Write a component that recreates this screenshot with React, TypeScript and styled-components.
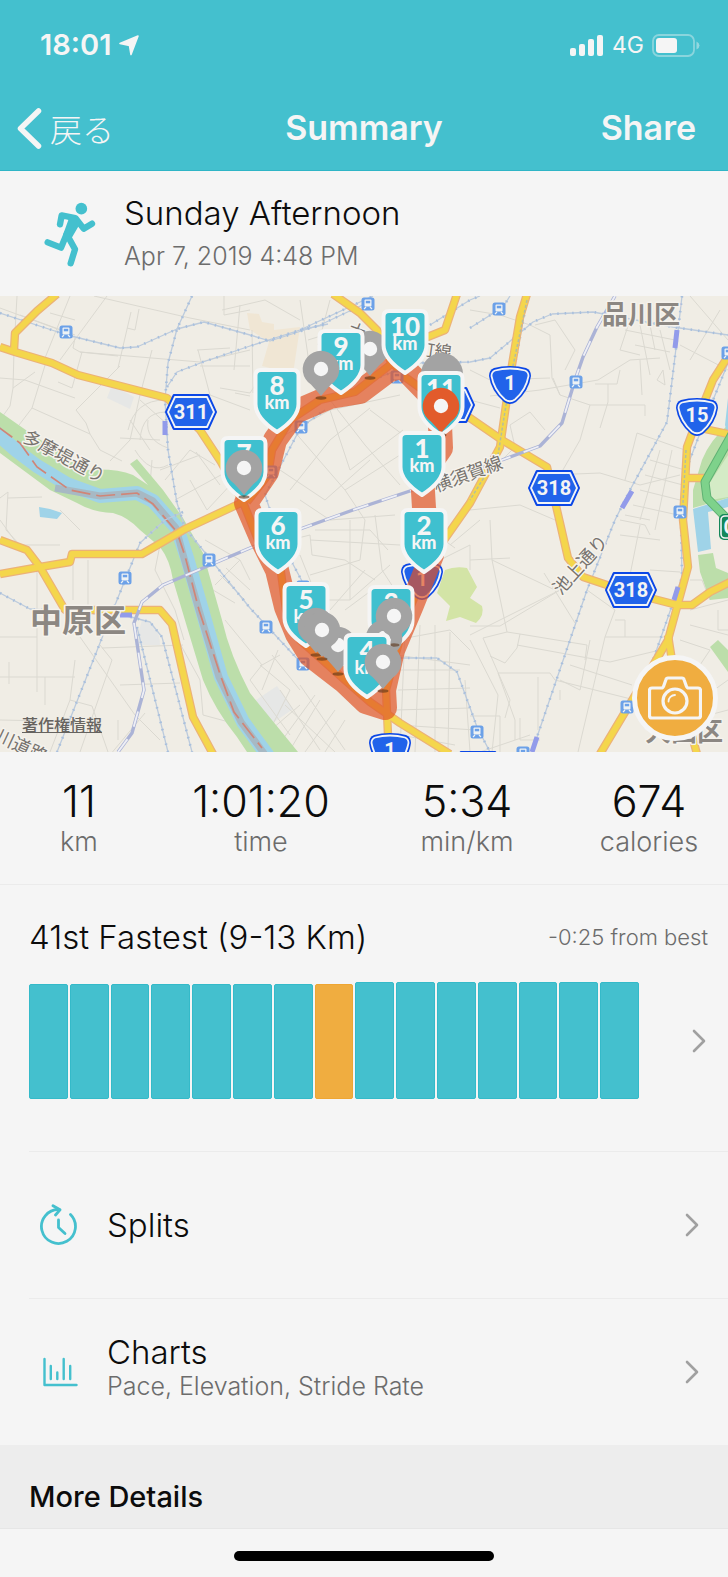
import React from "react";
import styled, { createGlobalStyle } from "styled-components";

const teal = "#44c0ce";
const orange = "#f0ad40";
const ink = "#0c0c0c";
const muted = "#6c6c6c";
const surface = "#f5f5f5";
const rule = "#ebebeb";

const GlobalStyle = createGlobalStyle`
  *, *::before, *::after { box-sizing: border-box; }
  html, body { margin: 0; min-height: 100%; }
  body {
    background: ${surface};
    color: ${ink};
    font-family: Inter, "Noto Sans CJK JP", sans-serif;
    font-weight: 300;
  }
  h1, h2, p, dl, dd, dt, ul { margin: 0; padding: 0; font-weight: inherit; }
  button { border: 0; padding: 0; background: none; color: inherit; font: inherit; cursor: pointer; }
  a { color: inherit; text-decoration: none; }
  svg { display: block; flex: none; }
`;

const Screen = styled.div`
  display: flex;
  flex-direction: column;
  min-height: 100vh;
`;

const Header = styled.header`
  background: ${teal};
  border-bottom: 1px solid #2fb5c6;
  color: ${surface};
`;

const StatusBar = styled.div`
  display: flex;
  align-items: center;
  justify-content: space-between;
  height: 90px;
  padding: 0 28px 0 40px;
`;

const StatusGroup = styled.div`
  display: flex;
  align-items: center;
  gap: 8px;
`;

const Clock = styled.time`
  font-size: 29px;
  font-weight: 600;
  line-height: 32px;
`;

const Network = styled.span`
  font-size: 23px;
  font-weight: 400;
  line-height: 28px;
`;

const NavBar = styled.nav`
  display: grid;
  grid-template-columns: 1fr auto 1fr;
  align-items: center;
  height: 80px;
  padding: 0 32px 4px;
  line-height: 44px;
`;

const BackButton = styled.button`
  display: flex;
  align-items: center;
  gap: 8px;
  justify-self: start;
  margin-left: -15px;
  font-family: "Noto Sans CJK JP", sans-serif;
  font-size: 32px;
  line-height: 40px;
`;

const NavTitle = styled.h1`
  font-size: 34px;
  font-weight: 600;
`;

const ShareButton = styled.button`
  justify-self: end;
  font-size: 34px;
  font-weight: 600;
`;

const Activity = styled.section`
  display: flex;
  align-items: center;
  gap: 28px;
  height: 125px;
  padding: 0 44px;
`;

const Title = styled.h2`
  font-size: 33px;
  line-height: 44px;
`;

const Caption = styled.p`
  color: ${muted};
  font-size: 25px;
  line-height: 42px;
`;

const MapPanel = styled.section`
  position: relative;
  height: 456px;
  overflow: hidden;
  background: #f0ede5;
`;

const MapDrawing = styled.svg`
  width: 100%;
  height: 100%;
`;

const LegalLink = styled.a`
  position: absolute;
  left: 22px;
  bottom: 16px;
  color: #66635f;
  font-family: "Noto Sans CJK JP", sans-serif;
  font-size: 16px;
  font-weight: 500;
  line-height: 24px;
  text-decoration: underline;
`;

const CameraButton = styled.button`
  position: absolute;
  right: 10px;
  bottom: 11px;
  display: grid;
  place-items: center;
  width: 86px;
  height: 86px;
  border: 5px solid ${surface};
  border-radius: 50%;
  background: ${orange};
`;

const Stats = styled.dl`
  display: grid;
  grid-template-columns: 158fr 206fr 206fr 158fr;
  height: 133px;
  padding-top: 24px;
  border-bottom: 1px solid ${rule};
  text-align: center;
`;

const Stat = styled.div`
  display: flex;
  flex-direction: column-reverse;
  justify-content: flex-end;
`;

const StatValue = styled.dd`
  font-size: 43px;
  line-height: 50px;
`;

const StatLabel = styled.dt`
  color: ${muted};
  font-size: 27px;
  line-height: 32px;
`;

const Ranking = styled.section`
  padding: 30px 20px 52px 29px;
`;

const RankingHeader = styled.div`
  display: flex;
  align-items: center;
  justify-content: space-between;
`;

const Delta = styled.p`
  color: ${muted};
  font-size: 22px;
  line-height: 28px;
`;

const RankingLink = styled.a`
  display: flex;
  align-items: center;
  justify-content: space-between;
  gap: 53px;
  padding-right: 2px;
  margin-top: 23px;
`;

const Bars = styled.div`
  display: flex;
  flex: 1;
  align-items: flex-end;
  gap: 2px;
  height: 117px;
`;

const Bar = styled.span<{ $current?: boolean; $tall?: boolean }>`
  flex: 1;
  height: ${(p) => (p.$tall ? 117 : 115)}px;
  border: 1px solid ${(p) => (p.$current ? "#efa632" : "#34bac9")};
  border-radius: 2px;
  background: ${(p) => (p.$current ? orange : teal)};
`;

const Rows = styled.ul`
  list-style: none;
`;

const Row = styled.li`
  margin-left: 29px;
  border-top: 1px solid ${rule};
`;

const RowLink = styled.a`
  display: flex;
  align-items: center;
  gap: 29px;
  height: 146px;
  padding: 0 29px 0 10px;
`;

const RowText = styled.div`
  flex: 1;
`;

const RowTitle = styled.p`
  font-size: 33px;
  line-height: 36px;
`;

const RowCaption = styled.p`
  padding-bottom: 8px;
  color: ${muted};
  font-size: 25px;
  line-height: 32px;
`;

const MoreDetails = styled.section`
  height: 84px;
  padding: 32px 29px 0;
  border-bottom: 1px solid #e6e6e6;
  background: #ededed;
`;

const MoreTitle = styled.h2`
  font-size: 29px;
  font-weight: 500;
  line-height: 40px;
`;

const HomeArea = styled.footer`
  display: flex;
  justify-content: center;
  padding: 22px 0 16px;
`;

const HomeIndicator = styled.span`
  width: 260px;
  height: 10px;
  border-radius: 5px;
  background: #000;
`;

const ChevronRight = () => (
  <svg width="14" height="24" viewBox="0 0 14 24" fill="none" stroke="#a0a0a0" strokeWidth="2.6" strokeLinecap="round" strokeLinejoin="round" aria-hidden="true">
    <path d="M2 2 L12 12 L2 22" />
  </svg>
);

const RunnerIcon = () => (
  <svg width="52" height="66" viewBox="130 605 156 198" fill="none" stroke={teal} strokeWidth="19" strokeLinecap="round" strokeLinejoin="round" aria-hidden="true">
    <circle cx="242" cy="628" r="17.5" fill={teal} stroke="none" />
    <path d="M178 675 L183 648 L224 656 L249 688 L274 673" />
    <path d="M190 648 L226 654 L241 668 L213 716 L187 706 L203 662Z" fill={teal} stroke="none" />
    <path d="M219 663 L199 706 L223 750 L210 792" />
    <path d="M199 702 L181 745 L141 729" />
  </svg>
);

const SplitsIcon = () => (
  <svg width="39" height="42" viewBox="0 0 39 42" fill="none" stroke={teal} strokeWidth="2.8" strokeLinecap="round" strokeLinejoin="round" aria-hidden="true">
    <path d="M31.500 10.500 A17 17 0 1 1 20 5.500" />
    <path d="M14 1.800 L21 5.800 L16.500 11" />
    <path d="M19.500 16 V23.500 L26 29.500" />
  </svg>
);

const ChartsIcon = () => (
  <svg width="39" height="30" viewBox="0 0 39 30" fill="none" stroke={teal} strokeWidth="2.4" strokeLinecap="round" strokeLinejoin="round" aria-hidden="true">
    <path d="M5.500 2 V28 H37.500" />
    <path d="M11.800 9 V22 M18.300 15.500 V22 M24.700 2 V22 M31.200 9 V22" />
  </svg>
);

const CameraIcon = () => (
  <svg width="54" height="45" viewBox="0 0 54 45" fill="none" stroke={surface} strokeWidth="3.2" strokeLinejoin="round" aria-hidden="true">
    <path d="M4 12 H13.5 Q15 12 15.7 10 L17.8 4 Q18.3 2 20 2 H34 Q35.7 2 36.2 4 L38.3 10 Q39 12 40.500 12 H50 Q52.500 12 52.500 14.500 V39.500 Q52.500 42 50 42 H4 Q1.500 42 1.500 39.500 V14.500 Q1.500 12 4 12 Z" />
    <circle cx="27" cy="25" r="12" />
    <path d="M20.500 25.500 A6.500 6.500 0 0 1 27 19" strokeWidth="1.800" strokeLinecap="round" />
  </svg>
);

const minorRoads = [
  "M17 296 L14 350 L13 388 L10 406 L0 420 M70 296 L45 358 M0 308 L60 330 M20 315 L75 335 M75 320 L50 313",
  "M94 296 L190 318 L250 330 M139 309 L135 330 L127 328 M107 296 L60 360 M131 312 L118 368 M75 338 L73 348 L80 352 L118 356",
  "M80 352 L200 362 L250 350 M152 350 L140 395 L130 440 L110 461 M0 378 L25 380 L75 398 M82 352 L72 388 L58 382",
  "M46 362 L32 408 L0 450 M32 408 L90 434 L86 423 L76 410 L120 366 M13 388 L35 372 M90 434 L100 450 L122 461",
  "M198 350 L210 395 L250 410 M200 366 H250 M197 350 L230 348 M235 393 L250 396 M224 296 V315 L250 310",
  "M120 438 L160 440 M130 420 L150 450 M140 400 L168 425 M128 430 Q135 400 165 400 M140 440 Q142 412 166 412 M135 450 Q150 475 168 465 M148 420 Q145 440 168 448 M152 460 L150 485",
  "M165 480 L190 450 L215 465 M175 500 L230 470 M160 470 L200 455 M190 480 L207 510 L235 480 M196 452 L220 485",
  "M0 498 L8 492 L6 530 L20 545 M8 498 L42 497 M0 520 L18 545 L60 545 M60 510 L80 530",
  "M73 560 V600 M88 560 V608 M37 566 V692 M0 637 H37 M80 637 L135 715 L160 740 M102 648 L183 645 M0 677 H75 M45 677 V705 M9 662 V684 M75 660 L70 700 L50 752",
  "M100 645 L112 660 L80 752 M120 685 L180 683 M110 755 L145 713 M70 700 L92 706 L108 752 M0 720 L100 722 M118 720 V740 M178 640 L200 680 L203 715 L240 725",
  "M160 545 L155 570 L175 610 L184 640 M215 585 L240 560 L250 580 M213 590 L235 603 M220 575 L245 600 M226 568 L250 590 M205 540 L240 560",
  "M222 310 L265 300 L300 320 M240 305 L234 370 M252 330 L253 393 M220 388 L250 393 L265 370 M300 300 L310 370 M330 300 L318 345 M308 340 L340 330",
  "M276 440 L330 410 L400 395 M293 430 L345 490 L400 455 M330 410 L350 470 L403 430 M280 470 L325 500 L370 460 M290 490 L330 440 L370 408",
  "M300 500 L330 520 L395 515 M345 490 L365 520 L360 560 L310 575 M330 400 L365 445 L400 485 M370 410 L410 440 M310 540 L400 545 M350 520 V600 M375 515 L382 570 L395 590",
  "M290 540 L310 535 L312 555 L345 560 L375 580 M300 555 L318 600 L350 600 L390 565 M315 530 L370 530 L388 550 M330 610 L365 570 M345 610 L372 590",
  "M225 620 L262 665 L280 655 M260 665 L290 690 L270 730 M272 655 L300 690 M262 665 L250 680 L290 735 M278 650 L262 690",
  "M280 690 L320 750 M300 685 L345 750 M320 700 L290 750 M335 710 L305 752 M345 720 L325 752 M285 705 L335 752 M265 735 L300 705 M275 750 L315 695",
  "M395 640 L450 630 L470 650 M400 670 H460 M398 690 L470 688 M405 630 L400 752 M420 625 L415 752 M435 625 V752 M450 632 L448 752 M395 655 L470 665 M395 710 L470 708 M398 725 L475 730 M400 735 L455 745 M465 680 L470 752",
  "M440 560 L470 545 L470 570 M450 545 L480 520 M430 530 L455 548",
  "M470 310 L500 315 L530 325 L550 335 M470 370 L490 380 L550 378 M490 396 L540 390 L598 380 L630 360 L660 358 M535 325 L555 320 L575 350 L565 370",
  "M550 335 L552 378 L560 395 L590 405 H645 V416 M595 384 H617 L620 370 M608 384 V402 L600 428 M590 405 L580 440 L560 475 M553 378 L560 395 M640 360 L642 395",
  "M502 460 L515 447 L510 425 L530 412 L545 430 M470 400 L500 408 M550 475 L600 473 L640 485 L680 475",
  "M630 320 L620 350 L640 355 M640 325 L650 375 M650 325 L655 350 M660 330 L670 370 M625 330 L675 340 M635 345 L670 352 M663 370 L665 385 L657 380 Z M680 345 L728 370 M690 296 L728 340",
  "M720 310 L690 360 M637 433 L665 443 L685 450 M637 433 L625 480 M660 450 L640 520 M672 450 L655 530 M650 460 L685 470 M645 475 L683 485 M640 490 L680 500 M633 505 L678 515 M625 515 L650 520",
  "M470 510 L520 505 L555 520 M490 520 L492 560 L555 590 M470 560 L510 558 M492 560 L507 632 M544 573 L575 623 M470 626 H500 L560 590 M470 635 L570 585",
  "M483 638 L507 632 M507 632 L520 634 L587 645 L585 660 M483 638 L510 700 L505 718 M470 640 L498 695 L492 752 M520 634 L517 648 L505 663 L490 656 M517 645 L610 662 L660 650",
  "M587 590 L615 610 L605 637 L578 752 M605 637 H665 M615 620 H625 V637 M570 665 L632 685 M560 680 L580 690 L590 640 M498 673 H550 L555 680 L635 700 M560 690 V700 M498 673 L515 720 V740 M538 677 V730",
  "M620 520 L645 525 L650 535 M620 535 L660 540 M640 525 L625 600 M650 570 L680 572 M690 610 L728 600 M690 625 L728 635 M680 640 L710 650 L690 680 M690 580 H702 L710 600 M718 610 V630 H728",
  "M470 716 H500 V752 M520 718 V740 H540 M480 752 L530 735 M700 700 L728 680 M690 720 L728 710",
];

const railways = [
  "M0 313 L67 335 L120 348 L137 347 L177 329 L204 322 L250 335 L270 341 L320 325 L373 300",
  "M192 296 L177 329 L168 363 L165 400 L168 450 L177 503 L185 528 L250 608 L303 665",
  "M167 387 L177 372 L203 362 L250 346 L300 330 L373 296 M300 330 L328 324",
  "M183 512 L165 520 L140 543 L115 605 L100 643 L57 752",
  "M0 593 L30 609 L123 615 L150 622 L162 637 L192 752 M137 627 L168 752",
  "M301 427 L265 495 L280 540 L303 583 M301 427 L325 410",
  "M393 658 L437 658 L457 672 L477 727 L490 752",
  "M430 325 L470 300 L480 296 M380 377 L415 363 L470 362 L490 358 L533 322 L552 314 L593 312 L673 327 L728 335",
  "M470 328 L503 307 L510 296",
  "M682 296 L677 340 L667 422 L630 490 L615 520 L587 590 L537 737 L532 752",
  "M728 363 L705 420 L686 470 L681 520 L682 577 L652 663 L632 697 L602 752",
  "M527 300 L498 455 L462 515",
];

const mainLine =
  "M118 752 L132 733 L144 690 L134 623 L142 602 L163 585 L250 548 L303 528 L353 510 L407 492 L502 460 L540 446 L562 423 L575 380 L583 357 L597 327 L615 296";

const yellowRoads = [
  "M57 294 L37 311 L15 333 L14 350",
  "M0 347 L15 352 L52 363 L78 375 L167 398 L200 430 L221 462 L243 502",
  "M0 574 L40 567 L70 562 L72 554 H142 L185 529 L243 502",
  "M0 540 L27 550 L40 567 L65 610 H160 L172 624 L193 717 L213 754",
  "M333 294 L360 313 L377 330 L390 360 L405 377 L430 395 L470 418 L502 440 L547 467 L560 523 L568 558 L583 577 L607 585 L650 598 L677 605 H692 L710 592 L730 582",
  "M457 294 L445 330 L415 342 L390 365 L355 392 L320 400 L290 420 L272 450 L268 475 L247 502",
  "M243 502 L258 540 L280 565 L286 610 L300 640 L345 680 L370 702 L400 723 L450 754",
  "M527 294 L520 317 L510 377 L500 447 L470 503 L430 560 L405 620 L386 690 L388 735",
  "M732 350 L713 380 L697 420 L687 447 L683 520 L688 567 L668 640 L652 667 L600 754",
  "M668 635 L673 667 L697 754 M700 428 L728 434 M687 478 H705",
];

const stations = [
  [66, 332], [368, 304], [301, 427], [397, 377], [271, 472], [499, 309], [576, 382], [728, 353], [680, 512],
  [125, 578], [209, 560], [266, 627], [303, 664], [477, 732], [627, 707], [523, 753], [303, 587],
];

const Station = ({ x, y }: { x: number; y: number }) => (
  <g transform={`translate(${x} ${y})`}>
    <rect x="-6.500" y="-6.500" width="13" height="13" rx="2.500" fill="#6ca1e8" />
    <path d="M-2.500 -4.500 H2.500 Q3.500 -4.500 3.500 -3.500 V1.500 Q3.500 2.500 2.500 2.500 H-2.500 Q-3.500 2.500 -3.500 1.500 V-3.500 Q-3.500 -4.500 -2.500 -4.500Z" fill="#eef2f4" />
    <rect x="-2.200" y="-3.200" width="4.400" height="2.500" fill="#6ca1e8" />
    <path d="M-2 3 L-4 5 M2 3 L4 5" stroke="#eef2f4" strokeWidth="1.200" />
  </g>
);

const SignText = styled.text`
  fill: #f4f4f4;
  font-family: Roboto, sans-serif;
  font-size: 20px;
  font-weight: 700;
  text-anchor: middle;
`;

const HexSign = ({ x, y, label }: { x: number; y: number; label?: string }) => (
  <g transform={`translate(${x} ${y})`} strokeLinejoin="round">
    <path d="M-17 -16.500 H17 L24.500 0 L17 16.500 H-17 L-24.500 0Z" fill="#0b47e6" stroke="#0b47e6" strokeWidth="3" />
    <path d="M-16 -15 H16 L23 0 L16 15 H-16 L-23 0Z" fill="#2163ea" stroke="#f2f4f6" strokeWidth="1.800" />
    {label && <SignText y="7">{label}</SignText>}
  </g>
);

const RouteSign = ({ x, y, label }: { x: number; y: number; label: string }) => (
  <g transform={`translate(${x} ${y})`}>
    <path d="M0 -19 Q9 -19 16 -17 Q21 -15 21 -9 Q19 6 6 17 Q0 21 -6 17 Q-19 6 -21 -9 Q-21 -15 -16 -17 Q-9 -19 0 -19Z" fill="#0b47e6" />
    <path d="M0 -16.500 Q8 -16.500 15 -14.500 Q18.500 -13 18.500 -9 Q16 5 5 14.500 Q0 18 -5 14.500 Q-16 5 -18.500 -9 Q-18.500 -13 -15 -14.500 Q-8 -16.500 0 -16.500Z" fill="#2163ea" stroke="#f2f4f6" strokeWidth="1.800" />
    <SignText y="5">{label}</SignText>
  </g>
);

const MarkerText = styled.text<{ $unit?: boolean }>`
  fill: ${surface};
  font-family: Lato, sans-serif;
  font-size: ${(p) => (p.$unit ? 18 : 26)}px;
  font-weight: 900;
  text-anchor: middle;
`;

const KmMarker = ({ x, y, km }: { x: number; y: number; km: string }) => (
  <g transform={`translate(${x} ${y})`}>
    <path d="M-16 2 H16 Q21.500 2 21.500 7.500 V36 Q21.500 50 0 64 Q-21.500 50 -21.500 36 V7.500 Q-21.500 2 -16 2Z" fill="#3fc0cf" stroke={surface} strokeWidth="4" strokeLinejoin="round" />
    <MarkerText y="27">{km}</MarkerText>
    <MarkerText y="41" $unit>km</MarkerText>
  </g>
);

const Drop = ({ x, y, color = "#a3a3a3" }: { x: number; y: number; color?: string }) => (
  <g transform={`translate(${x} ${y})`}>
    <ellipse cx="0" cy="29" rx="5.500" ry="1.700" fill="#5a3318" opacity="0.6" />
    <path d="M0 27 Q-4 22 -10 15.500 A18.300 18.300 0 1 1 10 15.500 Q4 22 0 27Z" fill={color} />
    <circle r="7.200" fill={surface} />
  </g>
);

const Place = styled.text<{ $size: number; $strong?: boolean }>`
  fill: ${(p) => (p.$strong ? "#8c8782" : "#77736e")};
  stroke: #f5f2ec;
  stroke-width: 3px;
  stroke-linejoin: round;
  paint-order: stroke;
  font-family: "Noto Sans CJK JP", sans-serif;
  font-size: ${(p) => p.$size}px;
  font-weight: ${(p) => (p.$strong ? 700 : 400)};
  text-anchor: middle;
`;

const routePath =
  "M440 425 L441 448 L422 475 L424 508 L432 555 L412 605 L393 650 L384 690 L385 708 L366 702 L345 682 L310 655 L297 634 L286 607 L277 570 L262 540 L246 503 L267 472 L275 440 L295 412 L330 397 L360 392 L388 371 L402 366 L432 397";

const RunMap = () => (
  <MapDrawing viewBox="0 296 728 456" preserveAspectRatio="xMidYMid slice" role="img" aria-label="Map of the run with a marker at each kilometre">
    <rect x="-400" y="296" width="1600" height="456" fill="#f0ede5" />
    <path d="M247 313 L259 314 L262 322 L274 324 L274 330 L300 327 L293 374 L262 366 L269 342 L250 330Z" fill="#f0e6d4" />
    <path d="M112 385 L134 397 L130 409 L107 398Z M256 700 L277 686 L293 709 L270 725Z M142 620 Q160 625 160 645 L135 645Z" fill="#e6e7e6" />
    <path d="M445 570 Q455 566 467 568 L477 587 L470 598 L482 606 Q485 615 476 623 L460 617 L446 621 L450 606 L437 593Z" fill="#d3e4a6" />

    <g fill="none" stroke="#dbd9d1" strokeWidth="1">
      {minorRoads.map((d) => <path key={d} d={d} />)}
    </g>

    <path d="M0 412 L33 435 L87 470 Q115 468 133 475 L148 485 L130 464 L137 459 L163 490 L183 518 L203 553 L222 620 Q230 655 250 693 L298 752 H247 L237 737 Q215 710 203 680 L187 627 L173 580 Q170 560 160 547 L140 530 Q128 517 113 513 Q92 512 77 503 L50 490 L0 453Z" fill="#bcdeaa" />
    <path d="M-5 432 L17 451 L37 466 L67 484 L100 496 L137 493 L153 501 L177 528 L187 558 L202 610 L221 677 L243 722 L268 756" fill="none" stroke="#9fd3e8" strokeWidth="14" strokeLinejoin="round" />
    <path d="M55 488 L100 496 L137 493 L153 501 L176 528 L184 558 L199 610 L219 677 L241 722 L266 756" fill="none" stroke="#a7b9c4" strokeWidth="7" strokeLinejoin="round" />
    <path d="M-3 426 L20 443 L37 467 L70 490 L100 496 L137 493 L153 504 L177 532 L185 556 L199 610 L221 677 L234 712 L262 748" fill="none" stroke="#d08577" strokeWidth="1.700" strokeDasharray="19 6" />
    <path d="M39 507 L50 509 L62 513 L57 519 L40 517Z" fill="#9fd3e8" />

    <path d="M728 425 Q710 440 702 460 L693 490 V508 L728 498Z M698 555 L713 553 L716 568 L728 573 V598 L710 600 L700 572Z M710 647 L718 640 L728 650 V672Z" fill="#bcdeaa" />
    <path d="M728 455 L709 484 L711 500 L728 497Z" fill="#d4ebc6" />
    <path d="M693 509 L728 498 V507 L708 512 L711 549 L698 552Z M728 398 L725 425 L728 436Z" fill="#9fd3e8" />

    <g fill="none" strokeLinejoin="round">
      <g stroke="#bccbdd" strokeWidth="1.300">{railways.map((d) => <path key={d} d={d} />)}</g>
      <g stroke="#a8bfdd" strokeWidth="2.600" strokeDasharray="1.500 6">{railways.map((d) => <path key={d} d={d} />)}</g>
      <g stroke="#ecb277" strokeWidth="8.400">{yellowRoads.map((d) => <path key={d} d={d} />)}</g>
      <g stroke="#f4d64c" strokeWidth="6">{yellowRoads.map((d) => <path key={d} d={d} />)}</g>
      <path d="M527 300 L510 380 L498 455 L470 500 M686 450 L682 520" stroke="#b4bda0" strokeWidth="1.500" strokeDasharray="3 2" />
      <path d={mainLine} stroke="#abb3d6" strokeWidth="3.400" />
      <path d={mainLine} stroke="#eeeff5" strokeWidth="1.800" strokeDasharray="16 14" />
      <path d="M165 421 V435 M677 330 L675 348 M632 491 L622 508 M678 587 L674 600 M120 615 H132 M537 737 L532 752" stroke="#929bea" strokeWidth="5" />
      <path d="M732 434 L705 482 L707 498 L732 524" stroke="#5fb173" strokeWidth="9" />
      <path d="M732 434 L705 482 L707 498 L732 524" stroke="#7ed28b" strokeWidth="7" />
    </g>

    {stations.map(([x, y]) => <Station key={`${x}-${y}`} x={x} y={y} />)}

    <Place $size={26} $strong x="641" y="324">品川区</Place>
    <Place $size={32} $strong x="78" y="632">中原区</Place>
    <Place $size={26} $strong x="684" y="741">大田区</Place>
    <Place $size={18} transform="translate(61 462) rotate(28)">多摩堤通り</Place>
    <Place $size={18} transform="translate(470 480) rotate(-20)">横須賀線</Place>
    <Place $size={18} transform="translate(585 569) rotate(-48)">池上通り</Place>
    <Place $size={17} transform="translate(417 354) rotate(8)">大井町線</Place>
    <Place $size={18} transform="translate(19 752) rotate(25)">川道路</Place>
    <Place $size={17} transform="translate(355 337) rotate(20)">大</Place>

    <HexSign x={191} y={412} label="311" />
    <HexSign x={554} y={488} label="318" />
    <HexSign x={631} y={590} label="318" />
    <HexSign x={449} y={405} />
    <HexSign x={478} y={769} />
    <RouteSign x={510} y={385} label="1" />
    <RouteSign x={697} y={417} label="15" />
    <RouteSign x={422} y={581} label="1" />
    <RouteSign x={390} y={752} label="1" />
    <g transform="translate(719 514)">
      <rect width="40" height="26" rx="5" fill="#14875a" />
      <rect x="2" y="2" width="36" height="22" rx="4" fill="none" stroke="#f2f4f6" strokeWidth="1.600" />
      <SignText x="11" y="20">C</SignText>
    </g>

    <path d={routePath} fill="none" stroke="#e05426" strokeOpacity="0.7" strokeWidth="24" strokeLinecap="round" strokeLinejoin="round" />

    <KmMarker x={278} y={508} km="6" />
    <KmMarker x={277} y={368} km="8" />
    <Drop x={370} y={349} />
    <KmMarker x={405} y={309} km="10" />
    <KmMarker x={341} y={329} km="9" />
    <Drop x={321} y={369} />
    <KmMarker x={244} y={436} km="7" />
    <Drop x={244} y={468} />
    <circle cx="442" cy="374" r="21" fill="#a3a3a3" />
    <KmMarker x={441} y={371} km="11" />
    <Drop x={441} y={406} color="#e25b2b" />
    <KmMarker x={422} y={431} km="1" />
    <KmMarker x={424} y={508} km="2" />
    <KmMarker x={306} y={582} km="5" />
    <Drop x={316} y={626} />
    <Drop x={338} y={645} />
    <Drop x={322} y={630} />
    <KmMarker x={391} y={585} km="3" />
    <Drop x={384} y={638} />
    <Drop x={394} y={616} />
    <KmMarker x={367} y={633} km="4" />
    <Drop x={383} y={662} />
  </MapDrawing>
);

const stats = [
  { value: "11", label: "km" },
  { value: "1:01:20", label: "time" },
  { value: "5:34", label: "min/km" },
  { value: "674", label: "calories" },
];

const barCount = 15;
const currentBar = 7;

export default function App() {
  return (
    <Screen>
      <GlobalStyle />
      <Header>
        <StatusBar>
          <StatusGroup>
            <Clock dateTime="18:01">18:01</Clock>
            <svg width="20" height="21" viewBox="0 0 20 21" fill={surface} stroke={surface} strokeWidth="1.600" strokeLinejoin="round" aria-hidden="true">
              <path d="M1 8.500 L19 1 L12 19.500 L10.500 10.500Z" />
            </svg>
          </StatusGroup>
          <StatusGroup>
            <svg width="34" height="21" viewBox="0 0 34 21" fill={surface} aria-label="Signal strength" role="img">
              <rect x="0" y="13" width="6" height="8" rx="2" />
              <rect x="9" y="9" width="6" height="12" rx="2" />
              <rect x="18" y="4" width="6" height="17" rx="2" />
              <rect x="27" y="0" width="6" height="21" rx="2" />
            </svg>
            <Network>4G</Network>
            <svg width="48" height="23" viewBox="0 0 48 23" aria-label="Battery" role="img">
              <rect x="1" y="1" width="41" height="21" rx="6" fill="none" stroke={surface} strokeOpacity="0.4" strokeWidth="1.800" />
              <rect x="4" y="4" width="21" height="15" rx="3" fill={surface} />
              <path d="M44.500 7.500 Q47.500 9 47.500 11.500 Q47.500 14 44.500 15.500Z" fill={surface} fillOpacity="0.45" />
            </svg>
          </StatusGroup>
        </StatusBar>
        <NavBar>
          <BackButton type="button">
            <svg width="25" height="41" viewBox="0 0 25 41" fill="none" stroke={surface} strokeWidth="5.500" strokeLinecap="round" strokeLinejoin="round" aria-hidden="true">
              <path d="M21.500 3 L3.500 20.500 L21.500 38" />
            </svg>
            戻る
          </BackButton>
          <NavTitle>Summary</NavTitle>
          <ShareButton type="button">Share</ShareButton>
        </NavBar>
      </Header>

      <Activity>
        <RunnerIcon />
        <div>
          <Title>Sunday Afternoon</Title>
          <Caption>Apr 7, 2019 4:48 PM</Caption>
        </div>
      </Activity>

      <MapPanel>
        <RunMap />
        <LegalLink href="#legal">著作権情報</LegalLink>
        <CameraButton type="button" aria-label="Add photo">
          <CameraIcon />
        </CameraButton>
      </MapPanel>

      <Stats>
        {stats.map((s) => (
          <Stat key={s.label}>
            <StatLabel>{s.label}</StatLabel>
            <StatValue>{s.value}</StatValue>
          </Stat>
        ))}
      </Stats>

      <Ranking>
        <RankingHeader>
          <Title>41st Fastest (9-13 Km)</Title>
          <Delta>-0:25 from best</Delta>
        </RankingHeader>
        <RankingLink href="#ranking" aria-label="Show ranking">
          <Bars>
            {Array.from({ length: barCount }, (_, i) => (
              <Bar key={i} $current={i === currentBar} $tall={i > currentBar} />
            ))}
          </Bars>
          <ChevronRight />
        </RankingLink>
      </Ranking>

      <Rows>
        <Row>
          <RowLink href="#splits">
            <SplitsIcon />
            <RowText>
              <RowTitle>Splits</RowTitle>
            </RowText>
            <ChevronRight />
          </RowLink>
        </Row>
        <Row>
          <RowLink href="#charts">
            <ChartsIcon />
            <RowText>
              <RowTitle>Charts</RowTitle>
              <RowCaption>Pace, Elevation, Stride Rate</RowCaption>
            </RowText>
            <ChevronRight />
          </RowLink>
        </Row>
      </Rows>

      <MoreDetails>
        <MoreTitle>More Details</MoreTitle>
      </MoreDetails>

      <HomeArea>
        <HomeIndicator />
      </HomeArea>
    </Screen>
  );
}
